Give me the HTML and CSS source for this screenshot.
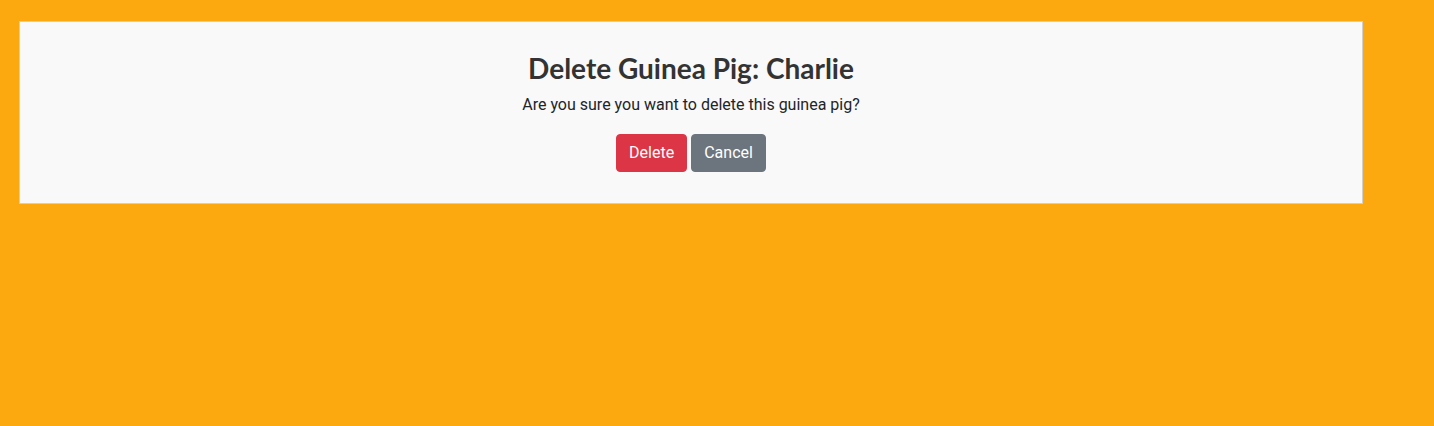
FILE: index.html
```html
<!DOCTYPE html>
<html lang="en">
<head>
<meta charset="utf-8">
<title>Delete Guinea Pig</title>
<link rel="stylesheet" href="styles.css">
</head>
<body>
<div class="card">
  <h2 class="title">Delete Guinea Pig: Charlie</h2>
  <p class="question">Are you sure you want to delete this guinea pig?</p>
  <div class="actions">
    <button class="btn btn-danger" type="button">Delete</button>
    <button class="btn btn-secondary" type="button">Cancel</button>
  </div>
</div>
</body>
</html>
```
FILE: styles.css
```css
html, body {
  margin: 0;
  padding: 0;
}
body {
  background: #fca910;
  font-family: Roboto, "Liberation Sans", sans-serif;
  font-size: 16px;
  line-height: 1.5;
  color: #212529;
  min-height: 426px;
  padding: 21px 71px 0 19px;
  box-sizing: border-box;
}
.card {
  background: #f9f9f9;
  border: 1px solid #cfcfcf;
  padding: 30px 20px 31px;
  text-align: center;
}
.title {
  font-family: Lato, "Liberation Sans", sans-serif;
  font-weight: 700;
  font-size: 28px;
  line-height: 1.2;
  color: #333333;
  margin: 0 0 7px;
}
.question {
  margin: 0 0 17px;
}
.actions {
  display: flex;
  justify-content: center;
  gap: 4px;
}
.btn {
  font-family: Roboto, "Liberation Sans", sans-serif;
  font-size: 16px;
  line-height: 24px;
  padding: 6px 12px;
  border: 1px solid transparent;
  border-radius: 4px;
  color: #ffffff;
  cursor: pointer;
}
.btn-danger {
  background: #dc3545;
  border-color: #dc3545;
}
.btn-secondary {
  background: #6c757d;
  border-color: #6c757d;
}
```
